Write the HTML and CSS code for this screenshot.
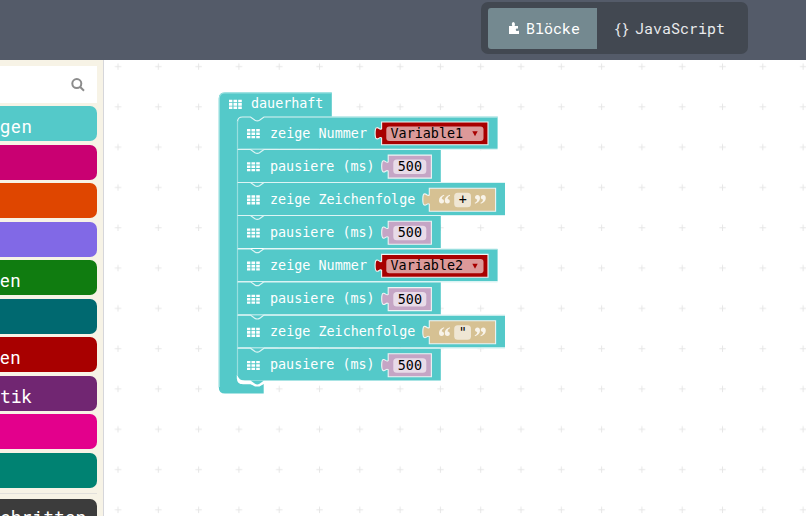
FILE: index.html
```html
<!DOCTYPE html>
<html lang="de">
<head>
<meta charset="utf-8">
<title>Blöcke</title>
<link rel="stylesheet" href="styles.css">
</head>
<body>
<header class="menubar">
  <div class="toggle">
    <div class="tab tab-blocks active">
      <svg class="puzzle" width="12" height="14" viewBox="0 0 12 14"><path d="M1 5H4.3C3.5 3.5 3.7 1 5.3 1S7.4 3.5 6.6 5H10V7.7C9.3 7.1 7.8 7.3 7.8 8.7S9.3 10.2 10 9.7H11V12.9H1Z"/></svg>
      <span>Blöcke</span>
    </div>
    <div class="tab tab-js"><span class="braces">{}</span><span>JavaScript</span></div>
  </div>
</header>
<main class="editor">
  <aside class="toolbox">
    <div class="search">
      <svg width="14" height="14" viewBox="0 0 14 14"><circle cx="5.8" cy="5.6" r="4.5"/><path d="M9.2 9L13 12.8"/></svg>
    </div>
    <div class="categories">
      <div class="cat plain basic">gen</div>
      <div class="cat input"></div>
      <div class="cat music"></div>
      <div class="cat led"></div>
      <div class="cat plain loops">en</div>
      <div class="cat logic"></div>
      <div class="cat plain variables">en</div>
      <div class="cat math">tik</div>
      <div class="cat radio"></div>
      <div class="cat arrays"></div>
    </div>
    <div class="separator"></div>
    <div class="cat advanced">chritten</div>
  </aside>
  <svg class="workspace" width="702" height="456" viewBox="104 60 702 456">
    <defs>
      <pattern id="grid" x="97.85" y="46.2" width="40.3" height="40.3" patternUnits="userSpaceOnUse">
        <path class="cross" d="M17 20.3H23.4M20.2 17.1V23.5"/>
      </pattern>
      <g id="handle">
        <path d="M0 0h3.4v2.4H0zM4.5 0h3.6v2.4H4.5zM9.2 0h3.6v2.4H9.2zM0 3.3h3.4v2.6H0zM4.5 3.3h3.6v2.6H4.5zM9.2 3.3h3.6v2.6H9.2zM0 6.8h3.4v2.3H0zM4.5 6.8h3.6v2.3H4.5zM9.2 6.8h3.6v2.3H9.2z"/>
      </g>
      <path id="top-edge" d="M237.5 .5H250.5L255 3.8Q257.3 5 259.5 3.8L264 .5"/>
      <g id="show-number">
        <path class="stmt" d="M237 0H497.6V32.3H237Z"/>
        <use href="#handle" x="247" y="12.6"/>
        <text class="label" x="270" y="21" textLength="97">zeige Nummer</text>
        <path class="value var" d="M381.6 5.5H488V28.3H381.6V21.4C379.4 19.7 379 23.1 376.6 22.3C374.6 21.7 374.6 11.7 376.6 11.2C379 10.5 379.4 14 381.6 12.3Z"/>
        <rect class="field var-field" x="386.3" y="10" width="97.2" height="14.4" rx="3"/>
        <path class="arrow" d="M472.3 14.8H477.7L475 19.8Z"/>
      </g>
      <g id="pause">
        <path class="stmt" d="M237 0H440.8V32.3H237Z"/>
        <use href="#handle" x="247" y="12.6"/>
        <text class="label" x="270" y="21" textLength="104.6">pausiere (ms)</text>
        <path class="value num" d="M388.2 5.5H431.4V28.5H388.2V21.4C386 19.7 385.6 23.1 383.2 22.3C381.2 21.7 381.2 11.7 383.2 11.2C385.6 10.5 386 14 388.2 12.3Z"/>
        <rect class="field num-field" x="393.3" y="10" width="33" height="14.4" rx="3.5"/>
        <text class="edit" x="397.8" y="21.6">500</text>
      </g>
      <g id="show-string">
        <path class="stmt" d="M237 0H505V32.3H237Z"/>
        <use href="#handle" x="247" y="12.6"/>
        <text class="label" x="270" y="21" textLength="145.3">zeige Zeichenfolge</text>
        <path class="value str" d="M429.3 5.5H495.6V28.5H429.3V21.4C427.1 19.7 426.7 23.1 424.3 22.3C422.3 21.7 422.3 11.7 424.3 11.2C426.7 10.5 427.1 14 429.3 12.3Z"/>
        <rect class="field str-field" x="454.2" y="10" width="16.8" height="14.6" rx="3.5"/>
        <path id="quote" class="quote" d="M444 12C440.8 13 439 15 439 17.8C439 19.7 440 20.8 441.6 20.8C443 20.8 444 19.8 444 18.5S443.1 16.4 441.8 16.3C441.8 14.8 442.6 13.6 444.3 13ZM449.8 12C446.6 13 444.8 15 444.8 17.8C444.8 19.7 445.8 20.8 447.4 20.8C448.8 20.8 449.8 19.8 449.8 18.5S448.9 16.4 447.6 16.3C447.6 14.8 448.4 13.6 450.1 13Z"/>
        <use href="#quote" transform="rotate(180 462.4 16.5)"/>
      </g>
    </defs>
    <rect x="104" y="60" width="702" height="456" fill="url(#grid)"/>

    <path class="stmt" d="M218.8 98.5Q218.8 92.6 225 92.6H331.8V117H242Q237 117 237 122V378Q237 384 242.5 384H250.5L255 386.5H259.5L263.7 384V393.4H225Q218.8 393.4 218.8 387.4Z"/>
    <path class="edge soft" d="M219.3 387V98.5Q219.3 93 225 93H331.5"/>
    <use href="#handle" x="229" y="99.8"/>
    <text class="label" x="251" y="108.4" textLength="72.4">dauerhaft</text>

    <use href="#show-number" y="116.5"/>
    <use href="#pause" y="149.6"/>
    <use href="#show-string" y="182.7"/>
    <use href="#pause" y="215.8"/>
    <use href="#show-number" y="248.9"/>
    <use href="#pause" y="282.1"/>
    <use href="#show-string" y="315.2"/>
    <use href="#pause" y="348.3"/>

    <path class="gap" d="M236.8 375V378.5Q237.5 384.2 243 384.2H251L254.2 385.2H259.8L264 383.8V380.7H245Q238.5 380.5 237.4 375Z"/>
    <path class="stmt" d="M250.5 380.6L255 383.8Q257.3 385 259.5 383.8L264 380.6Z"/>

    <path class="edge" d="M237.5 122Q237.5 117 242.5 117H250.5L255 120.3Q257.3 121.5 259.5 120.3L264 117H497.5"/>
    <path class="edge soft" d="M237.5 121V376"/>
    <use href="#top-edge" class="edge" y="149"/><path class="edge" d="M264 149.5H497.5"/>
    <use href="#top-edge" class="edge" y="182"/><path class="edge" d="M264 182.5H505"/>
    <use href="#top-edge" class="edge" y="215"/><path class="edge" d="M264 215.5H505"/>
    <use href="#top-edge" class="edge" y="248.3"/><path class="edge" d="M264 248.8H497.5"/>
    <use href="#top-edge" class="edge" y="281.3"/><path class="edge" d="M264 281.8H497.5"/>
    <use href="#top-edge" class="edge" y="314.6"/><path class="edge" d="M264 315.1H505"/>
    <use href="#top-edge" class="edge" y="347.7"/><path class="edge" d="M264 348.2H505"/>

    <text class="edit" x="390.5" y="138" textLength="72.6">Variable1</text>
    <text class="edit" x="390.5" y="270.4" textLength="72.6">Variable2</text>
    <text class="edit" x="458.7" y="203.7">+</text>
    <text class="edit" x="458.7" y="337">"</text>
  </svg>
</main>
</body>
</html>
```

FILE: styles.css
```css
* { box-sizing: border-box; }

body {
  margin: 0;
  width: 806px;
  height: 516px;
  overflow: hidden;
  background: #fff;
  font-family: "Roboto Mono", "DejaVu Sans Mono", monospace;
}

.menubar {
  height: 60px;
  padding: 2px 58px 0 0;
  display: flex;
  justify-content: flex-end;
  background: #545b69;
}

.toggle {
  width: 267px;
  height: 52px;
  padding: 6px 7px 5px;
  display: flex;
  border-radius: 7px;
  background: #424851;
}

.tab {
  display: flex;
  align-items: center;
  padding-bottom: 2px;
  font-size: 15px;
  color: #e9eaec;
}

.tab-blocks {
  width: 109px;
  padding-left: 20px;
  gap: 6px;
}

.tab.active {
  border-radius: 3px 0 0 3px;
  background: #748990;
  color: #fff;
}

.tab-js { padding-left: 16px; gap: 6px; }
.braces { width: 16px; letter-spacing: -1.2px; }
.puzzle { fill: #fff; }

.editor {
  display: flex;
  height: 456px;
}

.toolbox {
  flex: none;
  width: 104px;
  padding: 6px 6px 0 0;
  overflow: hidden;
  background: #f7f3e6;
  border-right: 1px solid #d6d6da;
}

.search {
  height: 37px;
  padding: 12px 12px 0 0;
  display: flex;
  justify-content: flex-end;
  background: #fff;
}

.search svg {
  fill: none;
  stroke: #8c8c8c;
  stroke-width: 2;
}

.categories {
  margin-top: 3px;
  display: flex;
  flex-direction: column;
  gap: 3.55px;
}

.cat {
  height: 35px;
  padding-top: 3px;
  border-radius: 0 7px 7px 0;
  font-size: 18px;
  line-height: 35px;
  color: #fff;
}

.plain {
  font-family: Roboto, sans-serif;
  letter-spacing: 1px;
}

.basic { background: #54c9c9; }
.input { background: #c90072; }
.music { background: #df4600; }
.led { background: #8169e6; }
.loops { background: #107c10; }
.logic { background: #006970; }
.variables { background: #a80000; }
.math { background: #712672; }
.radio { background: #e3008c; }
.arrays { background: #008272; }

.separator {
  height: 1px;
  margin: 5px 0;
  background: #e2e0dc;
}

.advanced {
  padding-top: 1px;
  background: #3c3c3c;
}

.workspace {
  flex: none;
  display: block;
  background: #fff;
}

.cross { fill: none; stroke: #e6e6e6; stroke-width: 1; }
.stmt { fill: #54c9c9; }
.edge { fill: none; stroke: #ddf4f4; stroke-width: 1.2; }
.edge.soft { stroke: #98dfdf; }
#handle { fill: #fff; }

.label, .edit {
  font-family: "DejaVu Sans Mono", monospace;
  font-size: 13.4px;
  fill: #fff;
}

.edit { fill: #000; }
.value { stroke: #eef4f4; stroke-width: 1.1; }
.var { fill: #a80000; }
.num { fill: #c5a5c5; }
.str { fill: #d6c193; }
.var-field { fill: #dc9999; }
.num-field { fill: #e8dbe8; }
.str-field { fill: #efe6d4; }
.field { stroke: none; }
.arrow { fill: #a80000; }
.quote { fill: #f8f3e9; }
.gap { fill: #fff; }
```
